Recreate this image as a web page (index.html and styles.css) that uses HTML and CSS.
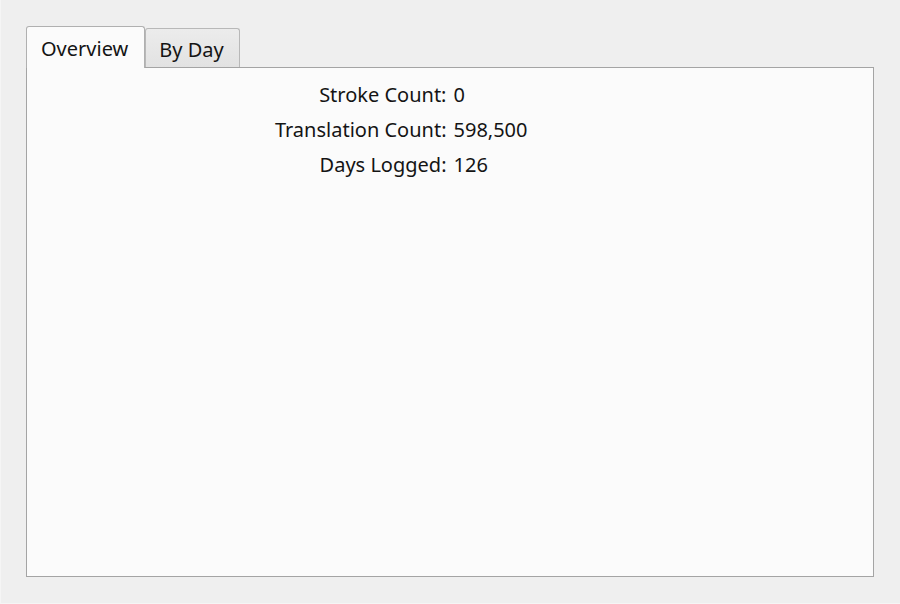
FILE: index.html
```html
<!DOCTYPE html>
<html>
<head>
<meta charset="utf-8">
<link rel="stylesheet" href="styles.css">
</head>
<body>
<div class="window">
  <div class="tabs">
    <div class="tab active">Overview</div>
    <div class="tab">By Day</div>
  </div>
  <div class="pane">
    <div class="form">
      <div class="label">Stroke Count:</div><div class="value">0</div>
      <div class="label">Translation Count:</div><div class="value">598,500</div>
      <div class="label">Days Logged:</div><div class="value">126</div>
    </div>
  </div>
</div>
</body>
</html>
```
FILE: styles.css
```css
html, body {
  margin: 0;
  padding: 0;
  width: 900px;
  height: 604px;
  overflow: hidden;
}
body {
  background: #efefef;
  font-family: "Noto Sans", "DejaVu Sans", sans-serif;
  color: #141414;
}
.window {
  box-sizing: border-box;
  width: 900px;
  height: 604px;
  padding: 26px 26px 26px 26px;
  border-left: 1px solid #f5f5f5;
  border-bottom: 1px solid #f5f5f5;
  display: flex;
  flex-direction: column;
}
.tabs {
  display: flex;
  align-items: flex-end;
  height: 41px;
  flex: none;
  margin-left: -1px;
}
.tab {
  box-sizing: border-box;
  height: 39px;
  padding: 0 15px 0 13px;
  font-size: 20px;
  line-height: 42px;
  background: linear-gradient(#ececec, #e2e2e2);
  border: 1px solid #b8b8b8;
  border-bottom: none;
  border-radius: 3px 3px 0 0;
}
.tab.active {
  height: 42px;
  padding: 0 16px 0 14px;
  line-height: 44px;
  background: #fbfbfb;
  border-color: #b0b0b0;
  margin-bottom: -1px;
  position: relative;
  z-index: 1;
}
.pane {
  flex: 1;
  margin-left: -1px;
  background: #fbfbfb;
  border: 1px solid #a4a4a4;
  padding-top: 13px;
}
.form {
  display: grid;
  grid-template-columns: 1fr 1fr;
  column-gap: 7px;
  row-gap: 7px;
  font-size: 20px;
  line-height: 28px;
}
.label {
  text-align: right;
}
.value {
  text-align: left;
}
```
